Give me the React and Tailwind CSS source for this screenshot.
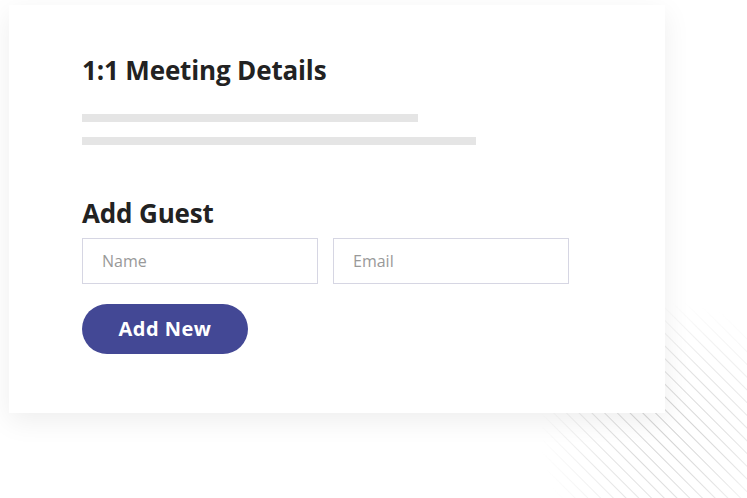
export default function App() {
  return (
    <div className="relative w-[747px] h-[498px] overflow-hidden bg-white" style={{ fontFamily: '"Open Sans", "Noto Sans", sans-serif' }}>
      <svg className="absolute left-0 top-0" width="747" height="498" viewBox="0 0 747 498">
        <defs>
          <pattern id="stripes" width="9" height="9" patternUnits="userSpaceOnUse" patternTransform="rotate(-45)">
            <line x1="0.5" y1="0" x2="0.5" y2="9" stroke="#cfcfcf" strokeWidth="1" />
          </pattern>
          <radialGradient id="fade" cx="670" cy="432" r="130" gradientUnits="userSpaceOnUse">
            <stop offset="0" stopColor="#fff" stopOpacity="1" />
            <stop offset="0.5" stopColor="#fff" stopOpacity="0.6" />
            <stop offset="1" stopColor="#fff" stopOpacity="0" />
          </radialGradient>
          <mask id="fadeMask">
            <rect x="0" y="0" width="747" height="498" fill="url(#fade)" />
          </mask>
        </defs>
        <rect x="0" y="0" width="747" height="498" fill="url(#stripes)" mask="url(#fadeMask)" />
      </svg>

      <div className="relative z-10 ml-[9px] mt-[5px] w-[656px] h-[408px] bg-white shadow-[0_8px_26px_rgba(0,0,0,0.07)] pl-[73px] pt-[52px]">
        <h2 className="text-[26px] leading-[26px] font-bold text-[#222] tracking-[-0.15px]">1:1 Meeting Details</h2>
        <div className="mt-[31px] w-[336px] h-[8px] bg-[#e5e5e5]" />
        <div className="mt-[15px] w-[394px] h-[8px] bg-[#e5e5e5]" />

        <h3 className="mt-[55px] text-[26px] leading-[26px] font-bold text-[#222] tracking-[-0.15px]">Add Guest</h3>
        <div className="mt-[12px] flex gap-[15px]">
          <div className="w-[236px] h-[46px] border border-[#d6d6e3] flex items-center pl-[19px] text-[16px] text-[#999]">Name</div>
          <div className="w-[236px] h-[46px] border border-[#d6d6e3] flex items-center pl-[19px] text-[16px] text-[#999]">Email</div>
        </div>
        <button className="mt-[20px] w-[166px] h-[50px] rounded-full bg-[#434895] text-white text-[20px] font-bold tracking-[0.5px] flex items-center justify-center">
          Add New
        </button>
      </div>
    </div>
  )
}
